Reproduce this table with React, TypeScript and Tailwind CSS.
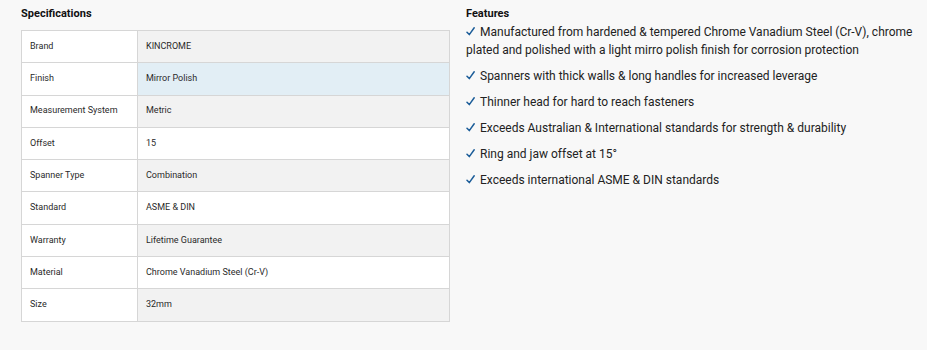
import React from 'react'

const specs = [
  ['Brand', 'KINCROME'],
  ['Finish', 'Mirror Polish'],
  ['Measurement System', 'Metric'],
  ['Offset', '15'],
  ['Spanner Type', 'Combination'],
  ['Standard', 'ASME & DIN'],
  ['Warranty', 'Lifetime Guarantee'],
  ['Material', 'Chrome Vanadium Steel (Cr-V)'],
  ['Size', '32mm'],
]

const features = [
  'Manufactured from hardened & tempered Chrome Vanadium Steel (Cr-V), chrome plated and polished with a light mirro polish finish for corrosion protection',
  'Spanners with thick walls & long handles for increased leverage',
  'Thinner head for hard to reach fasteners',
  'Exceeds Australian & International standards for strength & durability',
  'Ring and jaw offset at 15°',
  'Exceeds international ASME & DIN standards',
]

const Tick = () => (
  <svg width="9" height="9" viewBox="0 0 9 9" className="inline-block mr-[5px] align-[0px]">
    <path d="M1 5.2 L3.3 7.6 L8.2 0.8" fill="none" stroke="#1c5d99" strokeWidth="1.5" strokeLinecap="round" strokeLinejoin="round" />
  </svg>
)

export default function App() {
  return (
    <div className="w-[927px] h-[350px] bg-[#f8f8f8] text-[#222] flex gap-4 pl-[21px] pt-[7px]" style={{ fontFamily: 'Roboto, "Noto Sans", sans-serif' }}>
      <div className="w-[429px] shrink-0">
        <h3 className="text-[11px] font-bold leading-[14px] text-[#111] mb-[9px]">Specifications</h3>
        <table className="w-full border-collapse border border-[#d6d6d6] text-[9px] text-[#2a2a2a]">
          <tbody>
            {specs.map(([k, v], i) => (
              <tr key={k} className="h-[32.3px]">
                <td className="w-[116px] bg-white border border-[#d6d6d6] px-2">{k}</td>
                <td
                  className={
                    'border border-[#d6d6d6] px-2 ' +
                    (i === 1 ? 'bg-[#e2eef5]' : i % 2 === 0 ? 'bg-[#f2f2f2]' : 'bg-white')
                  }
                >
                  {v}
                </td>
              </tr>
            ))}
          </tbody>
        </table>
      </div>
      <div className="w-[455px]">
        <h3 className="text-[11px] font-bold leading-[14px] text-[#111] mb-[2px]">Features</h3>
        <ul className="flex flex-col gap-2 text-[12px] leading-[18px] text-[#222]">
          {features.map((f) => (
            <li key={f}>
              <Tick />
              {f}
            </li>
          ))}
        </ul>
      </div>
    </div>
  )
}
